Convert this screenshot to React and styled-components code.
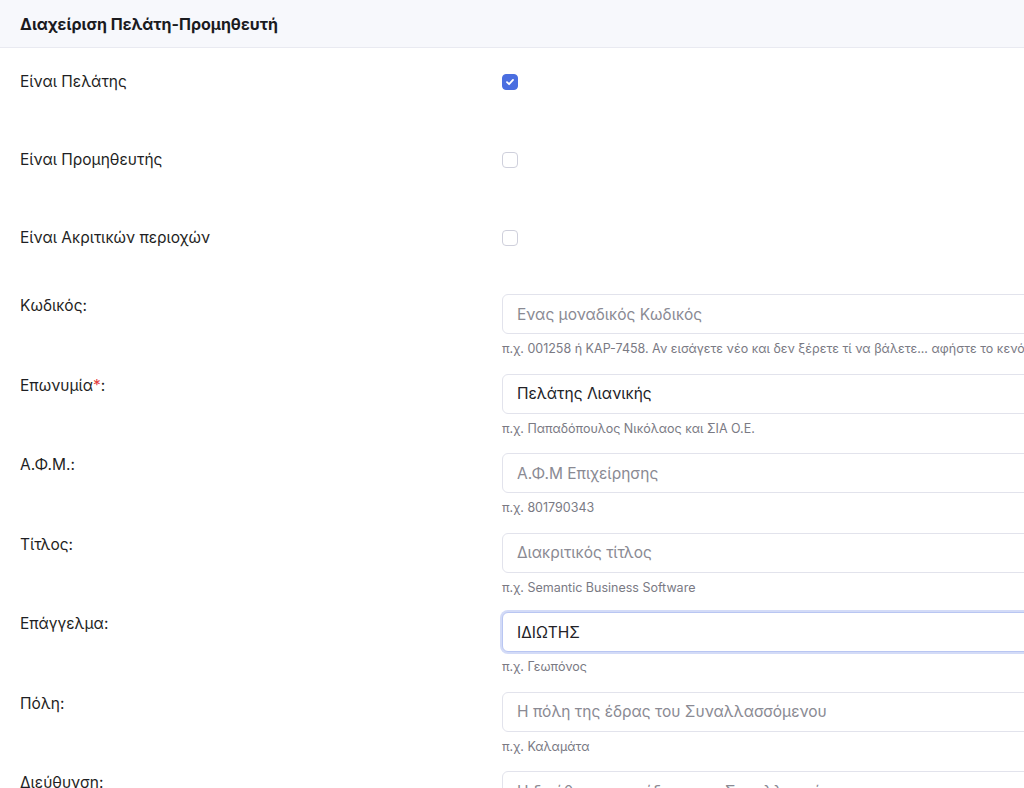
import React from 'react';
import styled, { createGlobalStyle } from 'styled-components';

const GlobalStyle = createGlobalStyle`
  html, body {
    margin: 0;
    padding: 0;
    overflow: hidden;
    background: #ffffff;
  }
  body {
    font-family: Inter, "Noto Sans", "Liberation Sans", sans-serif;
    color: #1f1f24;
  }
`;

// styling
const Page = styled.div`
  width: 1200px;
  min-height: 788px;
  background: #ffffff;
`;
const Header = styled.div`
  height: 47px;
  display: flex;
  align-items: center;
  padding: 0 20px;
  background-color: #f7f8fc;
  border-bottom: 1px solid #e9eaf1;
`;
const Title = styled.h3`
  margin: 0;
  font-size: 16px;
  font-weight: 700;
  color: #1b1b1f;
`;
const Form = styled.div`
  padding-left: 20px;
`;
const CheckRow = styled.div`
  display: grid;
  grid-template-columns: 482px 1fr;
  align-items: center;
  align-content: start;
  height: 78px;
  padding-top: 22px;
  box-sizing: border-box;
`;
const FieldRow = styled.div`
  display: grid;
  grid-template-columns: 482px 560px;
  align-items: start;
  margin-top: ${props => props.first ? '12px' : '0'};
  margin-bottom: 15.5px;
`;
const Label = styled.div`
  font-size: 15.5px;
  line-height: 24px;
  color: #1f1f24;
`;
const Required = styled.span`
  color: #e23c3c;
`;
const Box = styled.span`
  width: 16px;
  height: 16px;
  box-sizing: border-box;
  border-radius: 4px;
  display: flex;
  align-items: center;
  justify-content: center;
  background: ${props => props.checked ? '#4a6ee0' : '#ffffff'};
  border: 1px solid ${props => props.checked ? '#4a6ee0' : '#cfd0dc'};
`;
const Input = styled.input`
  display: block;
  box-sizing: border-box;
  width: 100%;
  height: 40px;
  border-radius: 6px;
  font-family: inherit;
  font-size: 15.5px;
  color: #222227;
  background: #fff;
  outline: none;
  border: 1px solid ${props => props.focused ? '#b9c6f2' : '#e2e3ec'};
  box-shadow: ${props => props.focused ? '0 0 0 2px #d3dbf7' : 'none'};
  padding: 0 14px;
  &::placeholder {
    color: #8a8a93;
  }
`;
const Help = styled.div`
  margin-top: 6px;
  font-size: 12.5px;
  line-height: 18px;
  color: #7a7a84;
  white-space: nowrap;
`;

const Check = ({ checked }) => (
  <Box checked={checked}>
    {checked && (
      <svg width="10" height="10" viewBox="0 0 10 10">
        <path d="M2 5.2 L4.1 7.2 L8 2.9" fill="none" stroke="#fff" strokeWidth="1.8" strokeLinecap="round" strokeLinejoin="round" />
      </svg>
    )}
  </Box>
);

const checks = [
  { label: 'Είναι Πελάτης', checked: true },
  { label: 'Είναι Προμηθευτής', checked: false },
  { label: 'Είναι Ακριτικών περιοχών', checked: false },
];

const fields = [
  { label: 'Κωδικός:', placeholder: 'Ενας μοναδικός Κωδικός', help: 'π.χ. 001258 ή KAP-7458. Αν εισάγετε νέο και δεν ξέρετε τί να βάλετε... αφήστε το κενό' },
  { label: 'Επωνυμία', required: true, value: 'Πελάτης Λιανικής', help: 'π.χ. Παπαδόπουλος Νικόλαος και ΣΙΑ Ο.Ε.' },
  { label: 'Α.Φ.Μ.:', placeholder: 'Α.Φ.Μ Επιχείρησης', help: 'π.χ. 801790343' },
  { label: 'Τίτλος:', placeholder: 'Διακριτικός τίτλος', help: 'π.χ. Semantic Business Software' },
  { label: 'Επάγγελμα:', value: 'ΙΔΙΩΤΗΣ', focused: true, help: 'π.χ. Γεωπόνος' },
  { label: 'Πόλη:', placeholder: 'Η πόλη της έδρας του Συναλλασσόμενου', help: 'π.χ. Καλαμάτα' },
  { label: 'Διεύθυνση:', placeholder: 'Η διεύθυνση της έδρας του Συναλλασσόμενου', help: 'π.χ. Αριστομένους 12' },
];

const App = () => (
  <Page>
    <GlobalStyle />
    <Header>
      <Title>Διαχείριση Πελάτη-Προμηθευτή</Title>
    </Header>
    <Form>
      {checks.map(c => (
        <CheckRow key={c.label}>
          <Label>{c.label}</Label>
          <Check checked={c.checked} />
        </CheckRow>
      ))}
      {fields.map((f, i) => (
        <FieldRow key={f.label} first={i === 0}>
          <Label>
            {f.label}
            {f.required && <><Required>*</Required>:</>}
          </Label>
          <div>
            <Input
              focused={f.focused}
              placeholder={f.placeholder}
              defaultValue={f.value}
              readOnly
            />
            <Help>{f.help}</Help>
          </div>
        </FieldRow>
      ))}
    </Form>
  </Page>
);

export default App;
